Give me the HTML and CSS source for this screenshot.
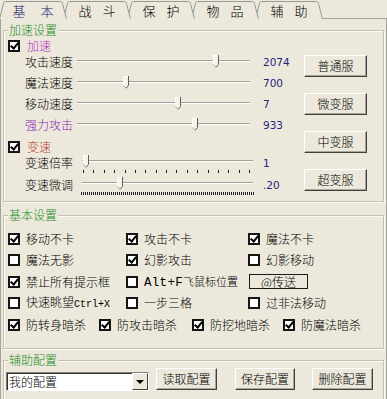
FILE: index.html
```html
<!DOCTYPE html>
<html>
<head>
<meta charset="utf-8">
<link rel="stylesheet" href="styles.css">
</head>
<body>
<svg class="defs" width="0" height="0" aria-hidden="true">
  <symbol id="th" viewBox="0 0 6 13">
    <path d="M0 0H6V9.5L3 13L0 9.5Z" fill="#F5F3EA"/>
    <path d="M0.5 9.5V0.5H5" stroke="#ffffff" fill="none"/>
    <path d="M5.5 0V9.4L3 12.4" stroke="#5f5e58" fill="none"/>
    <path d="M0.5 9.4L2.8 12.2" stroke="#a9a79b" fill="none"/>
  </symbol>
  <symbol id="tabshape" viewBox="0 0 68 19">
    <path d="M0.5 19L4.6 3.2Q5.1 1.5 6.8 1.5H61.2Q62.9 1.5 63.4 3.2L67.5 19" />
  </symbol>
</svg>
<div class="win">
  <div class="tabs">
    <div class="tab sel"><svg class="tshape" width="68" height="19"><use href="#tabshape"/></svg><span class="tt">基</span><span class="tt">本</span></div>
    <div class="tab t2"><svg class="tshape" width="68" height="19"><use href="#tabshape"/></svg><span class="tt">战</span><span class="tt">斗</span></div>
    <div class="tab t3"><svg class="tshape" width="68" height="19"><use href="#tabshape"/></svg><span class="tt">保</span><span class="tt">护</span></div>
    <div class="tab t4"><svg class="tshape" width="68" height="19"><use href="#tabshape"/></svg><span class="tt">物</span><span class="tt">品</span></div>
    <div class="tab t5"><svg class="tshape" width="68" height="19"><use href="#tabshape"/></svg><span class="tt">辅</span><span class="tt">助</span></div>
  </div>
  <div class="panel">
    <div class="grp g1">
      <span class="grp-title">加速设置</span>
      <div class="ctrls">
        <div class="chk-row"><span class="cb on"></span><span class="c-pink">加速</span></div>
        <div class="srow"><span class="lbl">攻击速度</span><div class="slider"><div class="track"></div><svg class="thumb" style="left:138px"><use href="#th"/></svg></div><span class="val">2074</span></div>
        <div class="srow"><span class="lbl">魔法速度</span><div class="slider"><div class="track"></div><svg class="thumb" style="left:48px"><use href="#th"/></svg></div><span class="val">700</span></div>
        <div class="srow"><span class="lbl">移动速度</span><div class="slider"><div class="track"></div><svg class="thumb" style="left:100px"><use href="#th"/></svg></div><span class="val">7</span></div>
        <div class="srow"><span class="lbl c-purple">强力攻击</span><div class="slider"><div class="track"></div><svg class="thumb" style="left:117px"><use href="#th"/></svg></div><span class="val">933</span></div>
        <div class="chk-row row-b"><span class="cb on"></span><span class="c-red">变速</span></div>
        <div class="srow tk"><span class="lbl">变速倍率</span><div class="slider"><div class="track"></div><svg class="thumb" style="left:3px"><use href="#th"/></svg><div class="ticks"><i></i><i></i><i></i><i></i><i></i><i></i><i></i><i></i><i></i><i></i><i></i><i></i><i></i><i></i><i></i><i></i><i></i></div></div><span class="val">1</span></div>
        <div class="srow tk"><span class="lbl">变速微调</span><div class="slider"><div class="track"></div><svg class="thumb" style="left:37px"><use href="#th"/></svg><div class="dense"></div></div><span class="val">.20</span></div>
      </div>
      <div class="btns">
        <button class="btn">普通服</button>
        <button class="btn">微变服</button>
        <button class="btn">中变服</button>
        <button class="btn">超变服</button>
      </div>
    </div>

    <div class="grp g2">
      <span class="grp-title">基本设置</span>
      <div class="grid">
        <div class="ck"><span class="cb on"></span>移动不卡</div>
        <div class="ck"><span class="cb on"></span>攻击不卡</div>
        <div class="ck"><span class="cb on"></span>魔法不卡</div>
        <div class="ck"><span class="cb"></span>魔法无影</div>
        <div class="ck"><span class="cb on"></span>幻影攻击</div>
        <div class="ck"><span class="cb"></span>幻影移动</div>
        <div class="ck"><span class="cb on"></span>禁止所有提示框</div>
        <div class="ck"><span class="cb"></span><span><span class="mono">Alt+F</span><span class="narrow">飞鼠标位置</span></span></div>
        <div class="ck"><span class="tp">@传送</span></div>
        <div class="ck"><span class="cb"></span><span>快速眺望<span class="mono sm">Ctrl+X</span></span></div>
        <div class="ck"><span class="cb"></span>一步三格</div>
        <div class="ck"><span class="cb"></span>过非法移动</div>
      </div>
      <div class="row5">
        <div class="ck w1"><span class="cb on"></span>防转身暗杀</div>
        <div class="ck w2"><span class="cb on"></span>防攻击暗杀</div>
        <div class="ck w3"><span class="cb on"></span>防挖地暗杀</div>
        <div class="ck"><span class="cb on"></span>防魔法暗杀</div>
      </div>
    </div>

    <div class="grp g3">
      <span class="grp-title">辅助配置</span>
      <div class="combo"><span class="ctext">我的配置</span><span class="cbtn"><i class="tri"></i></span></div>
      <button class="btn b1">读取配置</button>
      <button class="btn b2">保存配置</button>
      <button class="btn b3">删除配置</button>
    </div>
  </div>
</div>
</body>
</html>
```

FILE: styles.css
```css
* { box-sizing: border-box; }

body {
  margin: 0;
  background: #ECE9DC;
  font: 300 12px/14px "Noto Sans CJK SC", "Noto Sans", sans-serif;
  color: #000;
}

.defs { position: absolute; width: 0; height: 0; overflow: hidden; }

.win {
  width: 387px;
  height: 399px;
  overflow: hidden;
}

/* ---------- tabs ---------- */
.tabs {
  display: flex;
  height: 19px;
  margin-bottom: -1px;
  padding-left: 1px;
  position: relative;
  z-index: 1;
}

.tab {
  position: relative;
  width: 64px;
  height: 19px;
  display: flex;
  align-items: center;
  justify-content: center;
  gap: 11px;
  font-size: 13px;
  line-height: 15px;
  padding-top: 1px;
}

.tab .tshape {
  position: absolute;
  left: -2px;
  top: 0;
  fill: #ECE9DC;
  stroke: #9a9a94;
  stroke-width: 1;
}

.tab .tt { position: relative; }

.tab.sel { z-index: 6; color: #14146e; gap: 15px; }
.tab.t2 { z-index: 5; }
.tab.t3 { z-index: 4; }
.tab.t4 { z-index: 3; }
.tab.t5 { z-index: 2; }

/* ---------- panel ---------- */
.panel {
  height: 381px;
  border: 1px solid #a5a49c;
  border-bottom: none;
  padding: 0 2px;
}

.grp {
  position: relative;
  width: 381px;
  border: 1px solid #c4c1b3;
  box-shadow: inset 1px 1px 0 #fbfaf5, 1px 1px 0 #fbfaf5;
}

.grp-title {
  position: absolute;
  left: 4px;
  top: -8px;
  padding: 0 1px;
  background: #ECE9DC;
  color: #1c8c1c;
  line-height: 14px;
}

/* ---------- group 1 ---------- */
.g1 {
  margin-top: 11px;
  height: 172px;
  display: flex;
}

.ctrls {
  flex: 1;
  padding: 9px 0 0 4px;
}

.chk-row {
  height: 11px;
  display: flex;
  align-items: center;
  gap: 7px;
}

.row-b {
  margin-top: 6px;
  height: 12px;
}

.c-pink { color: #b62cc4; }
.c-purple { color: #8a1fb4; }
.c-red { color: #c0392b; }

.srow {
  height: 21px;
  display: flex;
  align-items: center;
  padding-left: 17px;
}

.lbl { width: 50px; flex: none; }

.slider {
  position: relative;
  width: 177px;
  height: 13px;
  flex: none;
}

.track {
  position: absolute;
  left: 2px;
  right: 2px;
  top: 5px;
  height: 2px;
  background: #a2a095;
  border-bottom: 1px solid #ffffff;
}

.thumb {
  position: absolute;
  top: 0;
  width: 6px;
  height: 13px;
}

.val {
  margin-left: 11px;
  font: 10.5px/12px "DejaVu Sans", sans-serif;
  color: #24247e;
}

.srow.tk {
  height: 22px;
  align-items: flex-start;
}

.srow.tk .lbl { width: 55px; margin-top: 3px; }
.srow.tk .slider { width: 175px; height: 19px; margin-top: 2px; }
.srow.tk .val { margin-left: 8px; margin-top: 4px; }

.ticks {
  position: absolute;
  left: 3px;
  right: 5px;
  top: 15px;
  height: 3px;
  display: flex;
  justify-content: space-between;
}

.ticks i {
  width: 1px;
  height: 3px;
  background: #222;
}

.dense {
  position: absolute;
  left: 1px;
  right: 0;
  top: 15px;
  height: 3px;
  background: repeating-linear-gradient(90deg, #222 0 1px, transparent 1px 2px);
}

.btns {
  width: 63px;
  margin-right: 16px;
  padding-top: 24px;
  display: flex;
  flex-direction: column;
  gap: 16px;
}

.btn {
  width: 63px;
  height: 22px;
  padding: 0;
  margin: 0;
  background: #ECE9DC;
  border: 1px solid;
  border-color: #ffffff #404040 #404040 #ffffff;
  box-shadow: inset -1px -1px 0 #a9a698;
  font: 300 12px/14px "Noto Sans CJK SC", sans-serif;
  color: #000;
  display: flex;
  align-items: center;
  justify-content: center;
}

/* ---------- group 2 ---------- */
.g2 {
  margin-top: 13px;
  height: 134px;
  padding: 12px 0 0 4px;
}

.grid {
  display: grid;
  grid-template-columns: 118px 122px 1fr;
  grid-auto-rows: 21.5px;
}

.ck {
  display: flex;
  align-items: center;
  gap: 6px;
  white-space: nowrap;
}

.cb {
  width: 12px;
  height: 12px;
  flex: none;
  position: relative;
  border: 2px solid #141414;
  background: #fff;
}

.cb.on::after {
  content: "";
  position: absolute;
  left: 2px;
  top: -1px;
  width: 3px;
  height: 6px;
  border: solid #000;
  border-width: 0 2px 2px 0;
  transform: rotate(40deg);
}

.mono {
  font: 12.5px/14px "Liberation Mono", monospace;
  letter-spacing: 0.3px;
}

.mono.sm {
  font: 10px/14px "Liberation Mono", monospace;
  letter-spacing: 0;
}

.narrow { font-size: 11px; }

.tp {
  width: 59px;
  height: 15px;
  margin-left: 1px;
  border: 1px solid #1a1a1a;
  display: flex;
  align-items: center;
  justify-content: center;
  line-height: 13px;
}

.row5 {
  display: flex;
  height: 21.5px;
}

.row5 .w1 { width: 91px; }
.row5 .w2 { width: 93px; }
.row5 .w3 { width: 91px; }

/* ---------- group 3 ---------- */
.g3 {
  margin-top: 11px;
  height: 50px;
  display: flex;
  align-items: flex-start;
  padding: 7px 0 0 2px;
}

.combo {
  width: 143px;
  height: 19px;
  margin-top: 4px;
  display: flex;
  align-items: center;
  border: 1px solid;
  border-color: #808078 #ffffff #ffffff #808078;
  box-shadow: inset 1px 1px 0 #303030;
  background: #fff;
}

.ctext { padding-left: 2px; }

.cbtn {
  margin-left: auto;
  width: 16px;
  height: 17px;
  background: #ECE9DC;
  border: 1px solid;
  border-color: #ffffff #404040 #404040 #ffffff;
  display: flex;
  align-items: center;
  justify-content: center;
}

.tri {
  width: 0;
  height: 0;
  border-left: 4px solid transparent;
  border-right: 4px solid transparent;
  border-top: 4px solid #000;
}

.g3 .btn { height: 22px; }
.g3 .b1 { width: 61px; margin-left: 7px; }
.g3 .b2 { width: 60px; margin-left: 18px; }
.g3 .b3 { width: 61px; margin-left: 17px; }
```
